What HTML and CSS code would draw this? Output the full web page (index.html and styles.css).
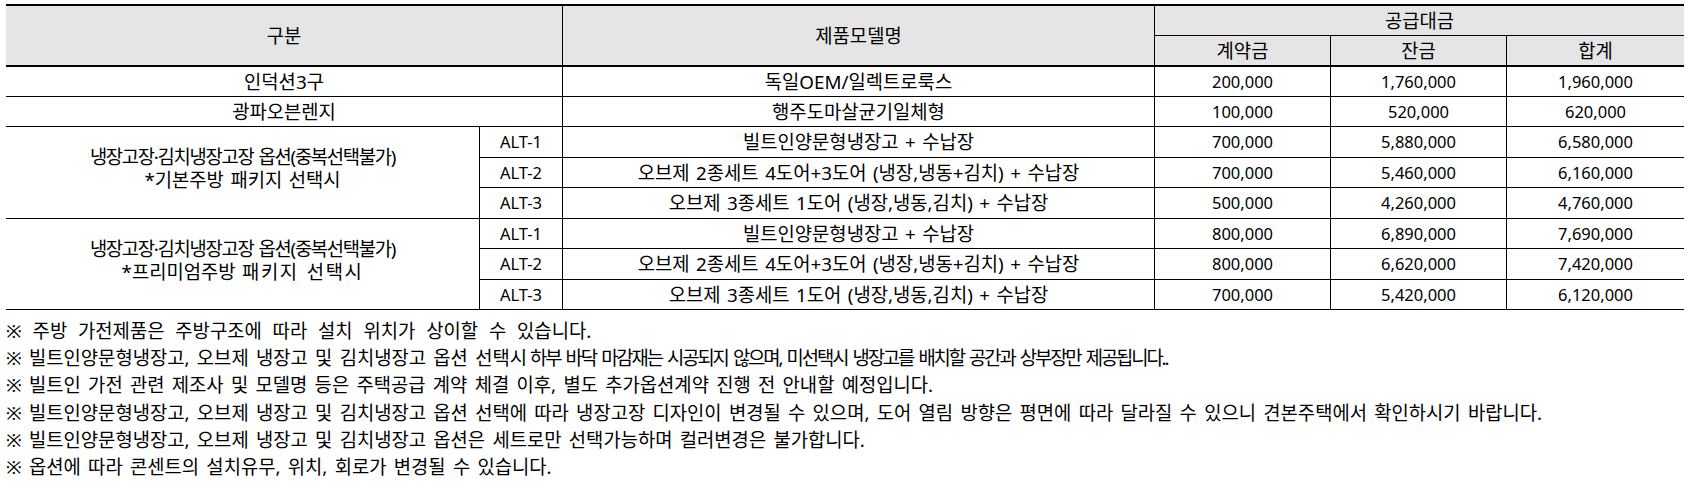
FILE: index.html
```html
<!DOCTYPE html>
<html lang="ko">
<head>
<meta charset="utf-8">
<title>빌트인 가전 옵션</title>
<link rel="stylesheet" href="styles.css">
</head>
<body>
<div class="page">
  <div class="sheet" role="table">
    <div class="c head span-c2 span-r2 hb" role="columnheader">구분</div>
    <div class="c head span-r2 hb" role="columnheader">제품모델명</div>
    <div class="c head span-c3 last" role="columnheader">공급대금</div>
    <div class="c head hb" role="columnheader">계약금</div>
    <div class="c head hb" role="columnheader">잔금</div>
    <div class="c head hb last" role="columnheader">합계</div>

    <div class="c span-c2">인덕션3구</div>
    <div class="c">독일OEM/일렉트로룩스</div>
    <div class="c num">200,000</div>
    <div class="c num">1,760,000</div>
    <div class="c num last">1,960,000</div>

    <div class="c span-c2">광파오븐렌지</div>
    <div class="c">행주도마살균기일체형</div>
    <div class="c num">100,000</div>
    <div class="c num">520,000</div>
    <div class="c num last">620,000</div>

    <div class="c span-r3 group"><span class="cond">냉장고장·김치냉장고장 옵션(중복선택불가)</span><br>*기본주방 패키지 선택시</div>
    <div class="c num">ALT-1</div>
    <div class="c">빌트인양문형냉장고 + 수납장</div>
    <div class="c num">700,000</div>
    <div class="c num">5,880,000</div>
    <div class="c num last">6,580,000</div>
    <div class="c num">ALT-2</div>
    <div class="c">오브제 2종세트 4도어+3도어 (냉장,냉동+김치) + 수납장</div>
    <div class="c num">700,000</div>
    <div class="c num">5,460,000</div>
    <div class="c num last">6,160,000</div>
    <div class="c num">ALT-3</div>
    <div class="c">오브제 3종세트 1도어 (냉장,냉동,김치) + 수납장</div>
    <div class="c num">500,000</div>
    <div class="c num">4,260,000</div>
    <div class="c num last">4,760,000</div>

    <div class="c span-r3 group"><span class="cond">냉장고장·김치냉장고장 옵션(중복선택불가)</span><br>*프리미엄주방 <span class="wide">패키지 선택시</span></div>
    <div class="c num">ALT-1</div>
    <div class="c">빌트인양문형냉장고 + 수납장</div>
    <div class="c num">800,000</div>
    <div class="c num">6,890,000</div>
    <div class="c num last">7,690,000</div>
    <div class="c num">ALT-2</div>
    <div class="c">오브제 2종세트 4도어+3도어 (냉장,냉동+김치) + 수납장</div>
    <div class="c num">800,000</div>
    <div class="c num">6,620,000</div>
    <div class="c num last">7,420,000</div>
    <div class="c num">ALT-3</div>
    <div class="c">오브제 3종세트 1도어 (냉장,냉동,김치) + 수납장</div>
    <div class="c num">700,000</div>
    <div class="c num">5,420,000</div>
    <div class="c num last">6,120,000</div>
  </div>

  <ul class="notes">
    <li class="loose">※ 주방 가전제품은 주방구조에 따라 설치 위치가 상이할 수 있습니다.</li>
    <li>※ 빌트인양문형냉장고, 오브제 냉장고 및 김치냉장고 옵션 선택<span class="tight">시 하부 바닥 마감재는 시공되지 않으며, 미선택시 냉장고를 배치할 공간과 상부장만 제공됩니다..</span></li>
    <li>※ 빌트인 가전 관련 제조사 및 모델명 등은 주택공급 계약 체결 이후, 별도 추가옵션계약 진행 전 안내할 예정입니다.</li>
    <li>※ 빌트인양문형냉장고, 오브제 냉장고 및 김치냉장고 옵션 선택에 따라 냉장고장 디자인이 변경될 수 있으며, 도어 열림 방향은 평면에 따라 달라질 수 있으니 견본주택에서 확인하시기 바랍니다.</li>
    <li>※ 빌트인양문형냉장고, 오브제 냉장고 및 김치냉장고 옵션은 세트로만 선택가능하며 컬러변경은 불가합니다.</li>
    <li>※ 옵션에 따라 콘센트의 설치유무, 위치, 회로가 변경될 수 있습니다.</li>
  </ul>
</div>
</body>
</html>
```

FILE: styles.css
```css
html, body {
  margin: 0;
  padding: 0;
  background: #ffffff;
}

body {
  font-family: "Noto Sans", "Noto Sans CJK KR", sans-serif;
  font-size: 18.8px;
  color: #000000;
}

.page {
  padding: 4px 0 0 6px;
}

.sheet {
  display: grid;
  width: 1678px;
  grid-template-columns: 474px 83px 592px 176px 176px 177px;
  grid-template-rows: 30px 31px 30px 30px 31px 30px 31px 30px 31px 30px;
  border-top: 2px solid #000;
}

.c {
  box-sizing: border-box;
  display: flex;
  align-items: center;
  justify-content: center;
  text-align: center;
  border-right: 1px solid #000;
  border-bottom: 1px solid #000;
  word-spacing: 1.6px;
  white-space: nowrap;
  line-height: 20px;
}

.c.num {
  font-size: 16.5px;
}

.c.last {
  border-right: 0;
}

.head {
  background: #e5e5e5;
}

.head.hb {
  border-bottom-width: 2px;
}

.span-c2 { grid-column: span 2; }
.span-c3 { grid-column: span 3; }
.span-r2 { grid-row: span 2; }
.span-r3 { grid-row: span 3; }

.c.group {
  display: block;
  line-height: 23px;
  padding: 19px 0 6px;
}

.cond {
  letter-spacing: -1.3px;
}

.wide {
  letter-spacing: 1.6px;
}

.notes {
  list-style: none;
  margin: 8px 0 0 0;
  padding: 0;
  line-height: 27.2px;
  word-spacing: 2.4px;
  white-space: nowrap;
}

.notes .loose {
  word-spacing: 6px;
}

.tight {
  letter-spacing: -2.1px;
}
```
